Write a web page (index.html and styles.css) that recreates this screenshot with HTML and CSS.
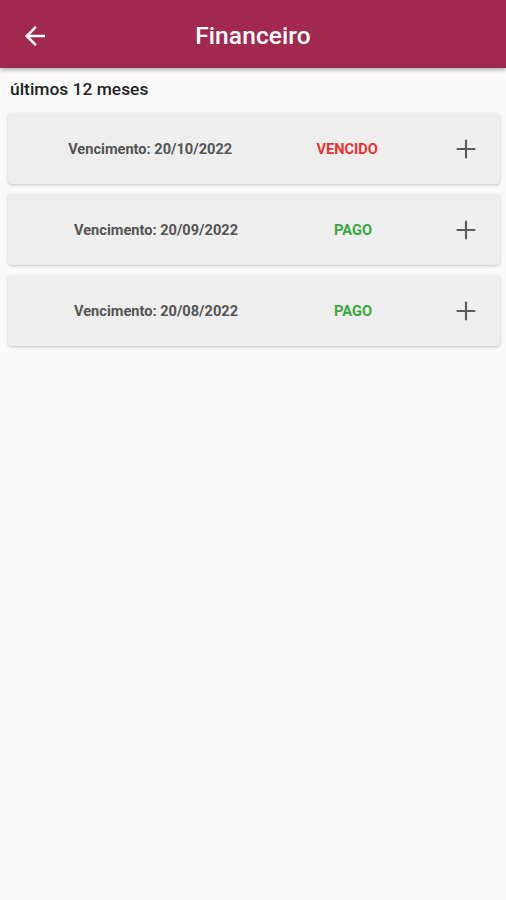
FILE: index.html
```html
<!DOCTYPE html>
<html>
  <head>
    <meta charset="utf-8">
    <meta name="viewport" content="width=device-width, initial-scale=1.0">
    <title>Financeiro</title>
    <link rel="stylesheet" href="styles.css">
  </head>
  <body>
    <header class="app-bar">
      <button class="back-button" aria-label="Voltar">
        <svg width="30" height="30" viewBox="0 0 24 24">
          <path fill="#fff" d="M20 11H7.83l5.59-5.59L12 4l-8 8 8 8 1.41-1.41L7.83 13H20v-2z"/>
        </svg>
      </button>
      <h1 class="app-title">Financeiro</h1>
    </header>

    <main class="content">
      <div class="period">últimos 12 meses</div>

      <div class="bill">
        <div class="bill-info">
          <span class="bill-date">Vencimento: 20/10/2022</span>
          <span class="bill-status late">VENCIDO</span>
        </div>
        <button class="expand-button" aria-label="Detalhes">
          <svg width="32" height="32" viewBox="0 0 24 24">
            <path fill="#5a5a5a" d="M19 12.8h-6.2V19h-1.6v-6.2H5v-1.6h6.2V5h1.6v6.2H19z"/>
          </svg>
        </button>
      </div>

      <div class="bill">
        <div class="bill-info">
          <span class="bill-date">Vencimento: 20/09/2022</span>
          <span class="bill-status paid">PAGO</span>
        </div>
        <button class="expand-button" aria-label="Detalhes">
          <svg width="32" height="32" viewBox="0 0 24 24">
            <path fill="#5a5a5a" d="M19 12.8h-6.2V19h-1.6v-6.2H5v-1.6h6.2V5h1.6v6.2H19z"/>
          </svg>
        </button>
      </div>

      <div class="bill">
        <div class="bill-info">
          <span class="bill-date">Vencimento: 20/08/2022</span>
          <span class="bill-status paid">PAGO</span>
        </div>
        <button class="expand-button" aria-label="Detalhes">
          <svg width="32" height="32" viewBox="0 0 24 24">
            <path fill="#5a5a5a" d="M19 12.8h-6.2V19h-1.6v-6.2H5v-1.6h6.2V5h1.6v6.2H19z"/>
          </svg>
        </button>
      </div>
    </main>
  </body>
</html>
```

FILE: styles.css
```css
html, body {
  width: 100%;
  height: 100%;
  margin: 0;
  padding: 0;
  background-color: #fafafa;
  color: #212121;
  font-family: Roboto, "Liberation Sans", sans-serif;
  overflow: hidden;
}
.app-bar {
  position: relative;
  z-index: 1;
  display: flex;
  align-items: center;
  justify-content: center;
  height: 68px;
  background-color: #a1294f;
  box-shadow: 0 2px 4px rgba(0, 0, 0, 0.3);
}
.back-button {
  position: absolute;
  left: 20px;
  top: 21px;
  display: flex;
  padding: 0;
  background: unset;
  border: 0;
  cursor: pointer;
}
.app-title {
  margin: 2px 0 0;
  color: #fff;
  font-size: 24.5px;
  font-weight: 500;
  letter-spacing: 0.1px;
}
.content {
  display: flex;
  flex-direction: column;
  gap: 10px;
  padding: 10px 6px 0 8px;
}
.period {
  padding-left: 2px;
  margin-bottom: 3px;
  font-size: 17.4px;
  font-weight: 500;
  line-height: 22px;
  color: #1f1f1f;
}
.bill {
  display: flex;
  align-items: center;
  height: 71px;
  background-color: #eeeeee;
  border-radius: 4px;
  box-shadow: 0 1px 3px rgba(0, 0, 0, 0.22);
}
.bill-info {
  flex: 1;
  display: flex;
  align-items: center;
  justify-content: space-around;
  margin-left: 18px;
  margin-right: 22px;
  padding-top: 1px;
}
.bill-date {
  font-size: 14.6px;
  font-weight: 700;
  color: #545454;
}
.bill-status {
  font-size: 14.6px;
  font-weight: 700;
}
.bill-status.late {
  color: #e8322f;
}
.bill-status.paid {
  color: #38a83c;
}
.expand-button {
  display: flex;
  align-items: center;
  justify-content: center;
  width: 48px;
  height: 48px;
  margin-right: 10px;
  padding: 0;
  background: unset;
  border: 0;
  cursor: pointer;
}
```
